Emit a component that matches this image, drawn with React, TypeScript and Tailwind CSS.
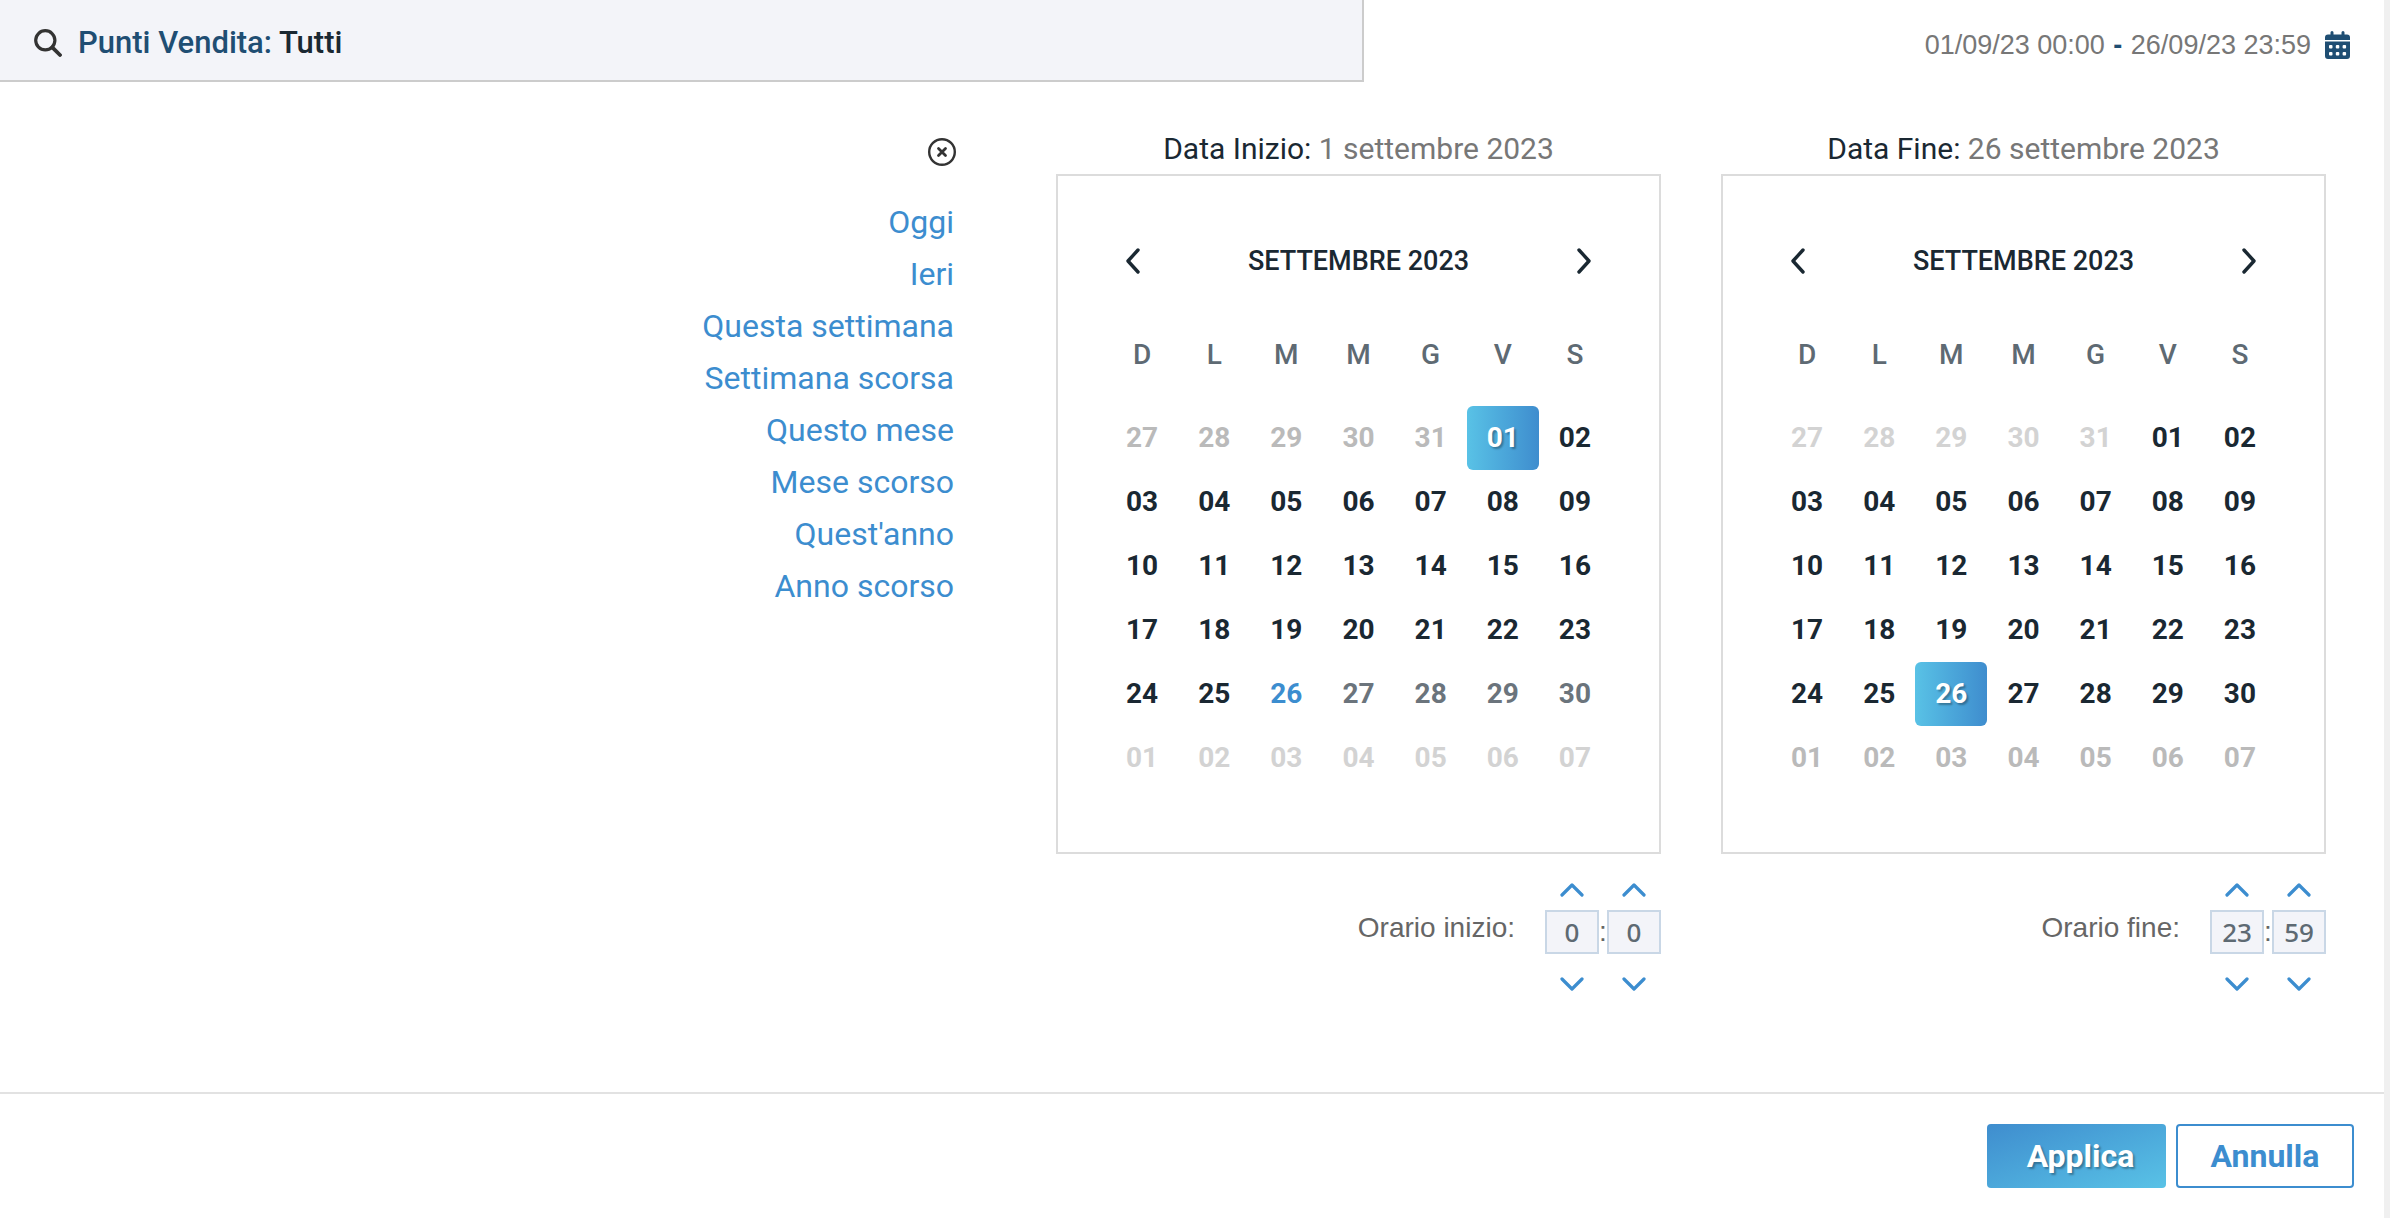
import React, { useState } from "react";

type Tone = "normal" | "today" | "future" | "muted" | "faint" | "selected";

const toneClass: Record<Tone, string> = {
  normal: "text-[#1a2832]",
  today: "text-[#3c8dcf]",
  future: "text-[#6b747c]",
  muted: "text-[#bababa]",
  faint: "text-[#d3d3d3]",
  selected:
    "rounded-md bg-linear-to-r from-[#59c2e6] to-[#3f8dce] text-white [text-shadow:2px_2px_2px_rgba(0,0,0,0.3)]",
};

const weekdays = ["D", "L", "M", "M", "G", "V", "S"];
const days = Array.from({ length: 42 }, (_, i) => {
  if (i < 5) return 27 + i;
  if (i < 35) return i - 4;
  return i - 34;
});

const shortcuts = [
  "Oggi",
  "Ieri",
  "Questa settimana",
  "Settimana scorsa",
  "Questo mese",
  "Mese scorso",
  "Quest'anno",
  "Anno scorso",
];

function startTone(i: number): Tone {
  if (i < 5) return "muted";
  if (i === 5) return "selected";
  if (i < 30) return "normal";
  if (i === 30) return "today";
  if (i < 35) return "future";
  return "faint";
}

function endTone(i: number): Tone {
  if (i < 5) return "faint";
  if (i === 30) return "selected";
  if (i < 35) return "normal";
  return "muted";
}

function SearchIcon() {
  return (
    <svg viewBox="0 0 28 28" className="size-7 text-[#333]" fill="none" stroke="currentColor" aria-hidden="true">
      <circle cx="11.3" cy="11.3" r="9.6" strokeWidth="3.2" />
      <path d="M18.3 18.3 26 26" strokeWidth="3.8" strokeLinecap="round" />
    </svg>
  );
}

function CalendarIcon() {
  return (
    <svg viewBox="0 0 25 28" className="h-7 w-[25px]" aria-hidden="true">
      <path
        fill="#1f4e73"
        d="M0 9V6.500a3 3 0 0 1 3-3h2.500V1.500a1.500 1.500 0 0 1 3 0v2h8v-2a1.500 1.500 0 0 1 3 0v2H22a3 3 0 0 1 3 3V9zM0 10.500h25V25a3 3 0 0 1-3 3H3a3 3 0 0 1-3-3z"
      />
      <g fill="#fff">
        <rect x="4" y="14" width="3.500" height="3.500" rx="1" />
        <rect x="10.800" y="14" width="3.500" height="3.500" rx="1" />
        <rect x="17.600" y="14" width="3.500" height="3.500" rx="1" />
        <rect x="4" y="21" width="3.500" height="3.500" rx="1" />
        <rect x="10.800" y="21" width="3.500" height="3.500" rx="1" />
        <rect x="17.600" y="21" width="3.500" height="3.500" rx="1" />
      </g>
    </svg>
  );
}

function CloseIcon() {
  return (
    <svg viewBox="0 0 28 28" className="size-7 text-[#333]" fill="none" stroke="currentColor" aria-hidden="true">
      <circle cx="14" cy="14" r="12.800" strokeWidth="2.400" />
      <path d="m10.500 10.500 7 7m0-7-7 7" strokeWidth="2.800" strokeLinecap="round" />
    </svg>
  );
}

function SideChevron({ next = false }: { next?: boolean }) {
  return (
    <svg viewBox="0 0 14 26" className="h-[26px] w-3.5" fill="none" stroke="#1a2832" strokeWidth="3.4" strokeLinecap="round" strokeLinejoin="round" aria-hidden="true">
      <path d={next ? "m2 2 10 11L2 24" : "M12 2 2 13l10 11"} />
    </svg>
  );
}

function StepChevron({ down = false }: { down?: boolean }) {
  return (
    <svg viewBox="0 0 24 14" className="h-3.5 w-6" fill="none" stroke="#3c8dcf" strokeWidth="3.2" strokeLinecap="round" strokeLinejoin="round" aria-hidden="true">
      <path d={down ? "m2 2 10 10L22 2" : "M2 12 12 2l10 10"} />
    </svg>
  );
}

function TimeStepper({ label, initial, max }: { label: string; initial: number; max: number }) {
  const [value, setValue] = useState(String(initial));
  const step = (d: number) => setValue((v) => String((Number(v) + d + max + 1) % (max + 1)));
  return (
    <div className="flex w-[54px] flex-col items-center">
      <button type="button" aria-label={`${label} più`} onClick={() => step(1)} className="flex h-10 items-center">
        <StepChevron />
      </button>
      <input
        aria-label={label}
        value={value}
        onChange={(e) => setValue(e.target.value)}
        className="h-11 w-full border-2 border-[#c9d7e6] bg-[#f3f4f9] text-center font-['Noto_Sans',sans-serif] text-[26px] font-medium text-[#5e6a73] outline-none"
      />
      <button type="button" aria-label={`${label} meno`} onClick={() => step(-1)} className="flex h-15 items-center">
        <StepChevron down />
      </button>
    </div>
  );
}

type PickerProps = {
  title: string;
  date: string;
  tone: (i: number) => Tone;
  timeLabel: string;
  hour: number;
  minute: number;
};

function DatePicker({ title, date, tone, timeLabel, hour, minute }: PickerProps) {
  return (
    <section className="w-[605px] shrink-0">
      <h2 className="text-center text-[30px] leading-[50px] text-[#1a2832]">
        {title} <span className="text-[#777]">{date}</span>
      </h2>
      <div className="border-2 border-[#dcdcdc] px-12 pt-[55px] pb-[62px]">
        <div className="flex h-[60px] items-center justify-between px-5">
          <button type="button" aria-label="Mese precedente">
            <SideChevron />
          </button>
          <span className="text-[27px] font-medium text-[#1a2832]">SETTEMBRE 2023</span>
          <button type="button" aria-label="Mese successivo">
            <SideChevron next />
          </button>
        </div>
        <table className="mt-[33px] w-full table-fixed border-collapse text-[28px]">
          <thead>
            <tr>
              {weekdays.map((d, i) => (
                <th key={i} scope="col" className="h-[82px] p-0 pb-5 align-middle font-medium text-[#5e6a73]">
                  {d}
                </th>
              ))}
            </tr>
          </thead>
          <tbody>
            {[0, 1, 2, 3, 4, 5].map((row) => (
              <tr key={row}>
                {days.slice(row * 7, row * 7 + 7).map((d, col) => (
                  <td key={col} className="h-16 p-0">
                    <button type="button" className={`block h-16 w-full font-bold ${toneClass[tone(row * 7 + col)]}`}>
                      {String(d).padStart(2, "0")}
                    </button>
                  </td>
                ))}
              </tr>
            ))}
          </tbody>
        </table>
      </div>
      <div className="mt-4 flex items-center justify-end font-['Liberation_Sans',Arial,sans-serif] text-[28px] text-[#666]">
        <span className="mr-[30px] pb-7">{timeLabel}</span>
        <TimeStepper label={`${timeLabel} ore`} initial={hour} max={23} />
        <span className="w-2 pb-5 text-center leading-10">:</span>
        <TimeStepper label={`${timeLabel} minuti`} initial={minute} max={59} />
      </div>
    </section>
  );
}

export default function App() {
  return (
    <div className="flex min-h-screen flex-col border-r-6 border-[#f0f0f0] bg-white font-['Roboto',sans-serif]">
      <header className="flex justify-between">
        <button
          type="button"
          className="flex h-[82px] w-[1364px] items-center gap-4 border-r-2 border-b-2 border-[#ccc] bg-[#f3f4f9] pt-1.5 pl-[34px] text-[31px] font-medium text-[#1f4e73]"
        >
          <SearchIcon />
          <span>
            Punti Vendita: <span className="text-[#1a2832]">Tutti</span>
          </span>
        </button>
        <button
          type="button"
          className="flex items-center gap-3.5 pt-2 pr-8.5 font-['Liberation_Sans',Arial,sans-serif] text-[27px] text-[#777]"
        >
          <span>
            01/09/23 00:00 <b className="mx-px text-[#1f4e73]">-</b> 26/09/23 23:59
          </span>
          <CalendarIcon />
        </button>
      </header>
      <main className="flex grow justify-end pt-[42px] pr-[58px]">
        <nav className="mr-[102px] flex flex-col items-end pt-3.5">
          <button type="button" aria-label="Chiudi" className="-mr-0.5">
            <CloseIcon />
          </button>
          <ul className="mt-[30px] text-right text-[32px] leading-[52px] text-[#3c8dcf]">
            {shortcuts.map((s) => (
              <li key={s}>
                <a href="#">{s}</a>
              </li>
            ))}
          </ul>
        </nav>
        <div className="flex gap-[60px]">
          <DatePicker title="Data Inizio:" date="1 settembre 2023" tone={startTone} timeLabel="Orario inizio:" hour={0} minute={0} />
          <DatePicker title="Data Fine:" date="26 settembre 2023" tone={endTone} timeLabel="Orario fine:" hour={23} minute={59} />
        </div>
      </main>
      <footer className="flex justify-end gap-2.5 border-t-2 border-[#e2e2e2] pt-[30px] pr-[30px] pb-[30px] text-[32px]">
        <button
          type="button"
          className="h-16 w-[179px] rounded bg-linear-to-br from-[#3f8dce] to-[#59c2e6] pl-2 font-bold text-white [text-shadow:2px_2px_2px_rgba(0,0,0,0.3)]"
        >
          Applica
        </button>
        <button type="button" className="h-16 w-[178px] rounded border-2 border-[#3c8dcf] font-bold text-[#3c8dcf]">
          Annulla
        </button>
      </footer>
    </div>
  );
}
